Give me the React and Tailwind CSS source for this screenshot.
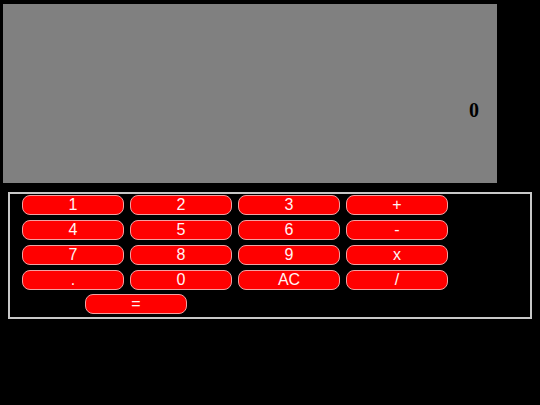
import React from "react";

const rows = [
  ["1", "2", "3", "+"],
  ["4", "5", "6", "-"],
  ["7", "8", "9", "x"],
  [".", "0", "AC", "/"],
];

function Key({ label }) {
  return (
    <button className="w-[102px] h-[20px] rounded-[8px] border border-[#f2a0a0] bg-[#ff0000] text-[16px] leading-none text-[#fff4f4] [font-family:'Liberation_Sans',Arial,sans-serif] flex items-center justify-center">
      {label}
    </button>
  );
}

export default function App() {
  return (
    <div className="w-[540px] h-[405px] bg-black overflow-hidden pt-[4px]">
      <div className="ml-[3px] w-[494px] h-[179px] bg-[#808080] flex justify-end pt-[96px] pr-[18px]">
        <span className="text-[20px] font-bold leading-none text-black [font-family:'Liberation_Serif','Times_New_Roman',serif]">
          0
        </span>
      </div>
      <div className="mt-[9px] ml-[8px] w-[524px] h-[127px] border-2 border-[#c8c8c8] pl-[12px] pt-[1px]">
        <div className="grid grid-cols-[repeat(4,102px)] gap-x-[6px] gap-y-[5px]">
          {rows.flat().map((k, i) => (
            <Key key={i} label={k} />
          ))}
        </div>
        <div className="mt-[4px] ml-[63px]">
          <Key label="=" />
        </div>
      </div>
    </div>
  );
}
